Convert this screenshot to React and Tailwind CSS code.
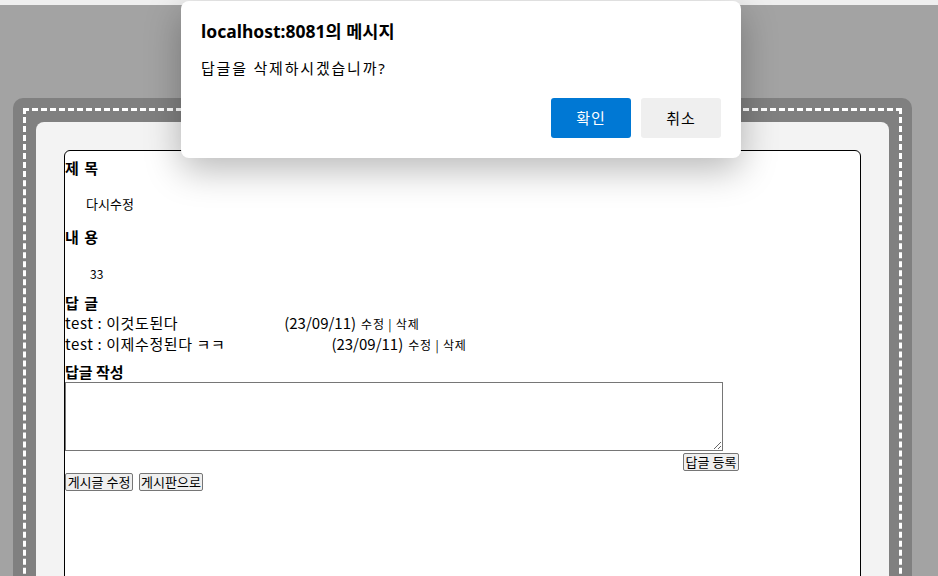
import { useState } from 'react';

const comments = [
    { id: 1, writer: 'test', content: '이것도된다', date: '23/09/11' },
    { id: 2, writer: 'test', content: '이제수정된다 ㅋㅋ', date: '23/09/11' },
];

function ConfirmDialog() {
    return (
        <div className="absolute left-[181px] top-[1px] w-[560px] h-[157px] bg-white rounded-lg shadow-[0_12px_36px_rgba(0,0,0,0.28)] font-['Noto_Sans','Noto_Sans_CJK_KR',sans-serif] text-black">
            <div className="pl-[20px] pt-[18px] text-[17.5px] font-bold leading-[24px]">localhost:8081의 메시지</div>
            <div className="pl-[20px] mt-[14px] text-[15px] leading-[22px] tracking-[1.8px]">답글을 삭제하시겠습니까?</div>
            <div className="flex justify-end gap-[10px] pr-[20px] mt-[19px]">
                <button className="w-[80px] h-[40px] rounded-[3px] bg-[#0078d4] text-white text-[15px] tracking-[1px]">확인</button>
                <button className="w-[80px] h-[40px] rounded-[3px] bg-[#efefef] text-black text-[15px] tracking-[1px]">취소</button>
            </div>
        </div>
    );
}

function App() {
    const [reply, setReply] = useState('');

    return (
        <div className="relative min-h-screen bg-[#a3a3a3] overflow-hidden font-['Noto_Sans_CJK_KR',sans-serif] text-black">
            <div className="h-[5px] bg-[#efefef]" />
            <div className="ml-[13px] mt-[93px] w-[899px] bg-[#808080] rounded-[10px] p-[10px]">
                <div className="border-[3px] border-dashed border-white pt-[11px] pl-[10px] pr-[10px]">
                    <div className="bg-[#f3f3f3] rounded-[8px] pt-[28px] pl-[28px] pr-[28px]">
                        <div className="bg-white border border-black rounded-[6px] h-[520px]">
                            <div className="mt-[7px] text-[15px] font-bold leading-[20px] tracking-[1px]">제 목</div>
                            <div className="mt-[17px] pl-[21px] text-[13px] leading-[18px]">다시수정</div>
                            <div className="mt-[14px] text-[15px] font-bold leading-[20px] tracking-[1px]">내 용</div>
                            <div className="mt-[19px] pl-[25px] text-[12px] leading-[16px]">33</div>
                            <div className="mt-[11px] text-[15px] font-bold leading-[20px] tracking-[1px]">답 글</div>
                            {comments.map((c) => (
                                <div key={c.id} className="text-[15px] leading-[20px] whitespace-nowrap">
                                    <span className="tracking-[0.6px]">{c.writer} : {c.content}</span>
                                    <span className="ml-[106px]">({c.date})</span>
                                    <span className="ml-[5px] text-[12px] tracking-[0.8px]">수정 | 삭제</span>
                                </div>
                            ))}
                            <div className="mt-[7px] text-[15px] font-bold leading-[20px]">답글 작성</div>
                            <div className="w-[674px]">
                                <textarea
                                    value={reply}
                                    onChange={(e) => setReply(e.target.value)}
                                    className="block w-[658px] h-[69px] border border-[#767676] resize-y outline-none"
                                />
                                <div className="flex justify-end mt-[2px]">
                                    <button className="w-[56px] h-[18px] bg-[#efefef] border border-[#767676] rounded-[2px] text-[13px] leading-[14px]">답글 등록</button>
                                </div>
                            </div>
                            <div className="flex gap-[6px] mt-[2px]">
                                <button className="w-[68px] h-[18px] bg-[#efefef] border border-[#767676] rounded-[2px] text-[13px] leading-[14px]">게시글 수정</button>
                                <button className="w-[64px] h-[18px] bg-[#efefef] border border-[#767676] rounded-[2px] text-[13px] leading-[14px]">게시판으로</button>
                            </div>
                        </div>
                    </div>
                </div>
            </div>
            <ConfirmDialog />
        </div>
    );
}

export default App;
